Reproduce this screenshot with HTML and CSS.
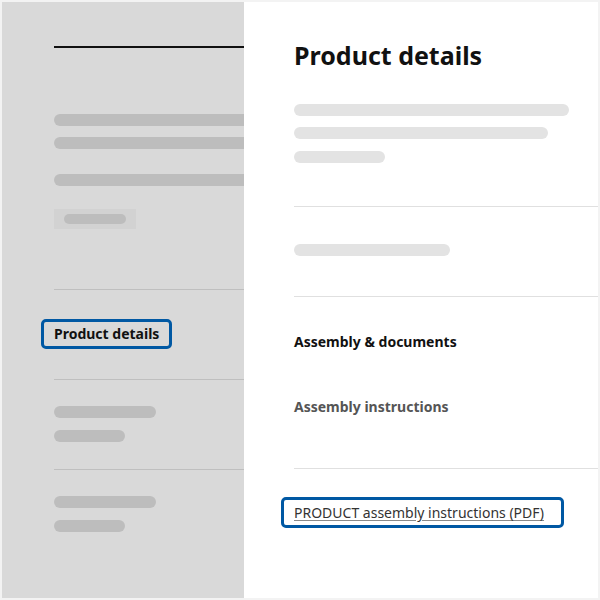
FILE: index.html
```html
<!DOCTYPE html>
<html>
<head>
<meta charset="utf-8">
<link rel="stylesheet" href="styles.css">
</head>
<body>
<div class="frame">
  <aside class="nav">
    <div class="rule-dark"></div>
    <div class="bar nav-bar1"></div>
    <div class="bar nav-bar2"></div>
    <div class="bar nav-bar3"></div>
    <div class="chip"><div class="chip-bar"></div></div>
    <div class="nav-div div1"></div>
    <div class="nav-item"><span class="focus">Product details</span></div>
    <div class="nav-div div2"></div>
    <div class="bar nav-short1 first"></div>
    <div class="bar nav-short2"></div>
    <div class="nav-div div3"></div>
    <div class="bar nav-short1 first"></div>
    <div class="bar nav-short2"></div>
  </aside>
  <main class="panel">
    <h1 class="title">Product details</h1>
    <div class="lbar lbar1"></div>
    <div class="lbar lbar2"></div>
    <div class="lbar lbar3"></div>
    <div class="p-div pd1"></div>
    <div class="lbar lbar4"></div>
    <div class="p-div pd2"></div>
    <h2 class="section">Assembly &amp; documents</h2>
    <h3 class="sub">Assembly instructions</h3>
    <div class="p-div pd3"></div>
    <div class="link-row"><a class="doc-link" href="#">PRODUCT assembly instructions (PDF)</a></div>
  </main>
</div>
</body>
</html>
```

FILE: styles.css
```css
html, body {
  margin: 0;
  padding: 0;
  background: #f3f3f3;
}
body {
  font-family: "Noto Sans", "Open Sans", sans-serif;
  width: 600px;
  height: 600px;
  overflow: hidden;
}
.frame {
  display: flex;
  margin: 2px;
  width: 596px;
  height: 596px;
}
.nav {
  width: 242px;
  flex: none;
  background: #d9d9d9;
  padding-left: 52px;
  box-sizing: border-box;
}
.rule-dark {
  margin-top: 44px;
  height: 2px;
  background: #111;
}
.bar {
  height: 12px;
  border-radius: 6px;
  background: #bdbdbd;
}
.nav-bar1 { margin-top: 66px; border-radius: 6px 0 0 6px; }
.nav-bar2 { margin-top: 11px; border-radius: 6px 0 0 6px; }
.nav-bar3 { margin-top: 25px; border-radius: 6px 0 0 6px; }
.chip {
  margin-top: 23px;
  width: 82px;
  height: 20px;
  box-sizing: border-box;
  padding: 5px 10px;
  background: #d2d2d2;
}
.chip-bar {
  height: 10px;
  border-radius: 5px;
  background: #bdbdbd;
}
.nav-div {
  height: 1px;
  background: #bfbfbf;
}
.div1 { margin-top: 60px; }
.div2 { margin-top: 30px; }
.div3 { margin-top: 27px; }
.nav-item {
  margin-top: 29px;
  height: 30px;
}
.focus {
  display: inline-block;
  margin-left: -13px;
  padding: 2px 10px;
  border: 3px solid #0058a3;
  border-radius: 5px;
  font-size: 14px;
  line-height: 20px;
  font-weight: 700;
  color: #111;
}
.nav-short1 { width: 102px; }
.nav-short1.first { margin-top: 26px; }
.nav-short2 { width: 71px; margin-top: 12px; }

.panel {
  flex: 1;
  background: #fff;
  padding-left: 50px;
  box-sizing: border-box;
}
.title {
  margin: 37px 0 0;
  font-size: 25px;
  line-height: 32px;
  font-weight: 700;
  color: #111;
}
.lbar {
  height: 12px;
  border-radius: 6px;
  background: #e3e3e3;
}
.lbar1 { margin-top: 33px; width: 275px; }
.lbar2 { margin-top: 11px; width: 254px; }
.lbar3 { margin-top: 12px; width: 91px; }
.lbar4 { margin-top: 37px; width: 156px; }
.p-div {
  height: 1px;
  background: #e0e0e0;
}
.pd1 { margin-top: 43px; }
.pd2 { margin-top: 40px; }
.pd3 { margin-top: 51px; }
.section {
  margin: 35px 0 0;
  font-size: 14px;
  line-height: 20px;
  font-weight: 700;
  color: #111;
}
.sub {
  margin: 45px 0 0;
  font-size: 14px;
  line-height: 20px;
  font-weight: 700;
  color: #555;
}
.link-row {
  margin-top: 28px;
}
.doc-link {
  display: inline-block;
  margin-left: -13px;
  padding: 3px 17px 2px 10px;
  border: 3px solid #0058a3;
  border-radius: 5px;
  font-size: 14px;
  line-height: 20px;
  color: #333;
  text-decoration: underline;
  text-decoration-color: #8a8a8a;
  text-underline-offset: 2px;
}
```
